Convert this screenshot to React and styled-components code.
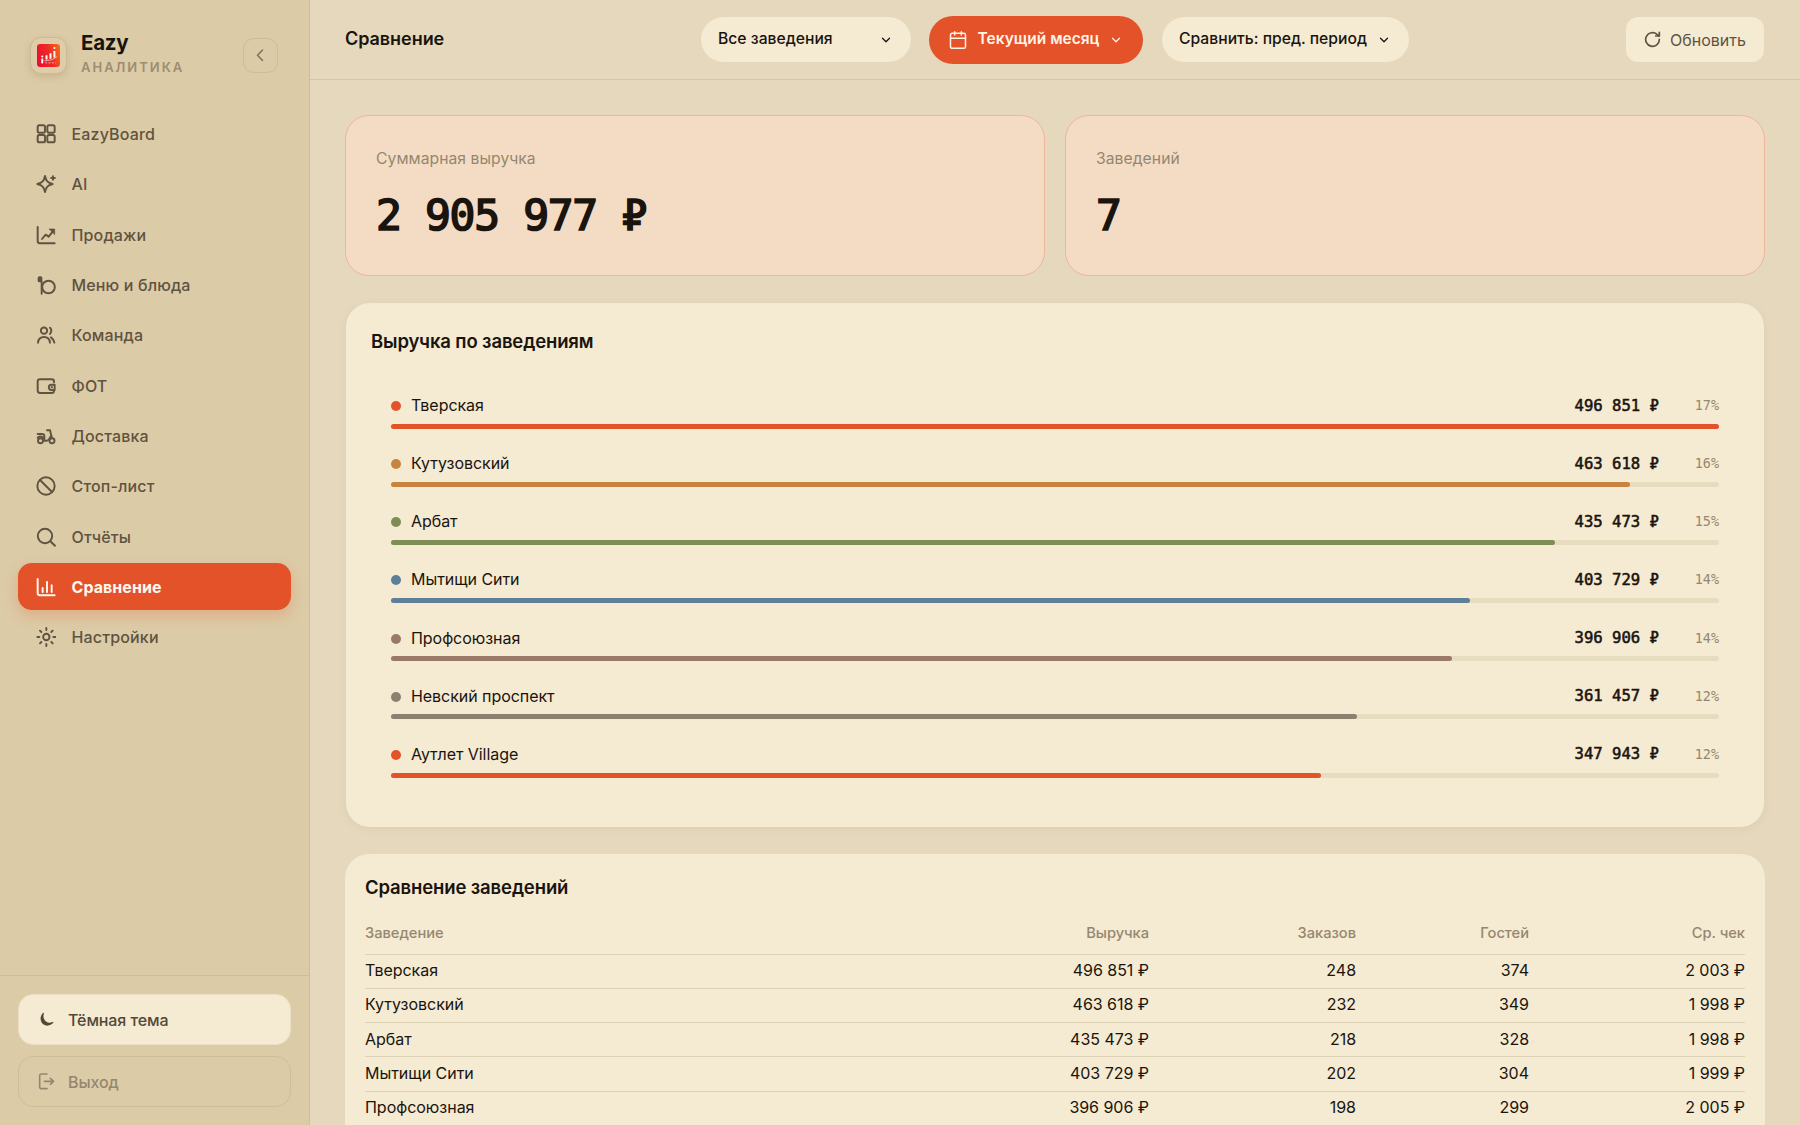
import React from 'react';
import styled, { createGlobalStyle, css } from 'styled-components';
import { Calendar, ChevronDown } from 'lucide-react';

const sans = "'Inter', 'Liberation Sans', sans-serif";
const mono = "'DejaVu Sans Mono', 'Liberation Mono', monospace";

const colors = {
  page: '#e5d8bc',
  sidebar: '#dccba7',
  panel: '#f5ead2',
  line: '#cebd9b',
  text: '#1a140e',
  soft: '#5f5341',
  muted: '#95876f',
  accent: '#e35229'
};

const venues = [
  { name: 'Тверская', revenue: 496851, share: 17, orders: 248, guests: 374, check: 2003, color: '#e35229' },
  { name: 'Кутузовский', revenue: 463618, share: 16, orders: 232, guests: 349, check: 1998, color: '#c8843e' },
  { name: 'Арбат', revenue: 435473, share: 15, orders: 218, guests: 328, check: 1998, color: '#7e8d54' },
  { name: 'Мытищи Сити', revenue: 403729, share: 14, orders: 202, guests: 304, check: 1999, color: '#5f7f99' },
  { name: 'Профсоюзная', revenue: 396906, share: 14, orders: 198, guests: 299, check: 2005, color: '#98796a' },
  { name: 'Невский проспект', revenue: 361457, share: 12, color: '#8d8070' },
  { name: 'Аутлет Village', revenue: 347943, share: 12, color: '#e35229' }
];

const maxRevenue = venues[0].revenue;

const money = (value) => `${String(value).replace(/\B(?=(\d{3})+$)/g, '\u00a0')}\u00a0₽`;

// nav glyphs, all drawn on a 60x60 grid
const icons = {
  board: (
    <>
      <rect x="5" y="4" width="22" height="22" rx="5" />
      <rect x="34" y="4" width="22" height="22" rx="5" />
      <rect x="5" y="33" width="22" height="22" rx="5" />
      <rect x="34" y="33" width="22" height="22" rx="5" />
    </>
  ),
  ai: (
    <>
      <path d="M27 6C30 21 35 26 50 30C35 34 30 39 27 54C24 39 19 34 4 30C19 26 24 21 27 6Z" />
      <path d="M51 6.5V17.5M45.5 12H56.5" />
    </>
  ),
  sales: (
    <>
      <path d="M5 6V48Q5 55 12 55H56" />
      <path d="M18 42L29 29L38 35L50 20" />
      <path d="M40 12H56V28Z" fill="currentColor" strokeWidth="2" />
    </>
  ),
  menu: (
    <>
      <circle cx="37.5" cy="36" r="19" />
      <path d="M17 20V56" />
      <rect x="7" y="6" width="10" height="14" rx="3" fill="currentColor" strokeWidth="4" />
    </>
  ),
  team: (
    <>
      <circle cx="24" cy="17" r="9.5" />
      <path d="M6 53C7 42 14 36 24 36C34 36 41 42 42 53" />
      <path d="M42 8Q50 17 42 27M45 37Q53 42 55 53" />
    </>
  ),
  payroll: (
    <>
      <path d="M54 19V17Q54 10 47 10H12Q5 10 5 17V43Q5 51 12 51H47Q54 51 54 45" />
      <path d="M56 26H46Q38.5 26 38.5 34T46 42H56Z" />
      <path d="M47 34H48" />
    </>
  ),
  delivery: (
    <>
      <circle cx="13.5" cy="44" r="7.5" />
      <circle cx="48" cy="44" r="7.5" />
      <path d="M33 13H42L47.5 35" />
      <path d="M5 24H18Q25 24 25 31V44H32Q38 44 44 31" />
      <path d="M5 35Q14 28 23 36" />
    </>
  ),
  stop: (
    <>
      <circle cx="30" cy="30" r="26" />
      <path d="M12 12L48 48" />
    </>
  ),
  search: (
    <>
      <circle cx="27" cy="27" r="21.5" />
      <path d="M43 43L57 56" />
    </>
  ),
  compare: (
    <>
      <path d="M5 6V48Q5 55 12 55H56" />
      <path d="M20 33V45M33 15V45M47 25V45" />
    </>
  ),
  settings: (
    <>
      <circle cx="31" cy="30" r="9.5" />
      <path d="M31 3V9M31 51V57M4 30H10M52 30H58M12 11L16 15M46 45L50 49M12 49L16 45M46 15L50 11" />
    </>
  )
};

const navItems = [
  { icon: 'board', label: 'EazyBoard' },
  { icon: 'ai', label: 'AI' },
  { icon: 'sales', label: 'Продажи' },
  { icon: 'menu', label: 'Меню и блюда' },
  { icon: 'team', label: 'Команда' },
  { icon: 'payroll', label: 'ФОТ' },
  { icon: 'delivery', label: 'Доставка' },
  { icon: 'stop', label: 'Стоп-лист' },
  { icon: 'search', label: 'Отчёты' },
  { icon: 'compare', label: 'Сравнение', active: true },
  { icon: 'settings', label: 'Настройки' }
];

function NavIcon({ name }) {
  return (
    <svg
      width="20"
      height="20"
      viewBox="0 0 60 60"
      fill="none"
      stroke="currentColor"
      strokeWidth="5.8"
      strokeLinecap="round"
      strokeLinejoin="round"
    >
      {icons[name]}
    </svg>
  );
}

function Logo() {
  return (
    <svg width="23" height="23" viewBox="0 0 70 70">
      <defs>
        <linearGradient id="logo" x1="0" y1="0.6" x2="1" y2="0.3">
          <stop offset="0" stopColor="#e8112f" />
          <stop offset="0.55" stopColor="#ee2a25" />
          <stop offset="1" stopColor="#f26a1b" />
        </linearGradient>
      </defs>
      <rect width="70" height="70" rx="10" fill="url(#logo)" />
      <g fill="#fff">
        <circle cx="16" cy="38" r="3.2" />
        <rect x="13" y="44" width="6" height="15" rx="2" />
        <rect x="26" y="34" width="6" height="13" rx="1" />
        <rect x="38" y="28" width="6" height="17" rx="1" />
        <rect x="50" y="21" width="6" height="20" rx="1" />
        <circle cx="53" cy="12" r="3.2" />
      </g>
      <path d="M23 51Q45 52 61 39" fill="none" stroke="#fff" strokeWidth="1.8" />
      <path d="M25 57H57" stroke="#fff" strokeWidth="5" strokeDasharray="6 4" opacity="0.4" />
    </svg>
  );
}

function Sidebar() {
  return (
    <Aside>
      <Brand>
        <LogoBox>
          <Logo />
        </LogoBox>
        <BrandText>
          <BrandName>Eazy</BrandName>
          <BrandSub>АНАЛИТИКА</BrandSub>
        </BrandText>
        <CollapseButton>
          <svg width="14" height="14" viewBox="0 0 14 14" fill="none" stroke="currentColor" strokeWidth="1.6" strokeLinecap="round" strokeLinejoin="round">
            <path d="M8.5 2L3.5 7.3L8.5 12.5" />
          </svg>
        </CollapseButton>
      </Brand>
      <Nav>
        {navItems.map((item) => (
          <NavItem key={item.label} $active={item.active}>
            <NavIcon name={item.icon} />
            <span>{item.label}</span>
          </NavItem>
        ))}
      </Nav>
      <SidebarFooter>
        <FooterButton $filled>
          <svg width="16" height="16" viewBox="0 0 48 48">
            <path d="M13 2C-1 13 3 40 24 41C33 41 41 36 44 30C41 29 38 32 31 32C17 31 10 17 15 3Z" fill="currentColor" />
          </svg>
          <span>Тёмная тема</span>
        </FooterButton>
        <FooterButton>
          <svg width="17" height="17" viewBox="0 0 51 51" fill="none" stroke="currentColor" strokeWidth="4.8" strokeLinecap="round" strokeLinejoin="round">
            <path d="M27 3H11Q5 3 5 9V41Q5 47 11 47H27" />
            <path d="M19 25H47M37 16L47 25L37 34" />
          </svg>
          <span>Выход</span>
        </FooterButton>
      </SidebarFooter>
    </Aside>
  );
}

function Header() {
  return (
    <Topbar>
      <PageTitle>Сравнение</PageTitle>
      <Filters>
        <Pill $width={210}>
          <span>Все заведения</span>
          <ChevronDown size={14} strokeWidth={2.2} />
        </Pill>
        <Pill $width={214} $accent>
          <Calendar size={20} strokeWidth={1.8} />
          <span>Текущий месяц</span>
          <ChevronDown size={14} strokeWidth={2.2} />
        </Pill>
        <Pill $width={247}>
          <span>Сравнить: пред. период</span>
          <ChevronDown size={14} strokeWidth={2.2} />
        </Pill>
      </Filters>
      <RefreshButton>
        <svg width="17" height="17" viewBox="0 0 51 51" fill="none" stroke="currentColor" strokeWidth="5" strokeLinecap="round" strokeLinejoin="round">
          <path d="M46 25A20.5 20.5 0 1 1 39 10L45 15" />
          <path d="M46 4V15H35" />
        </svg>
        <span>Обновить</span>
      </RefreshButton>
    </Topbar>
  );
}

function App() {
  return (
    <Layout>
      <GlobalStyle />
      <Sidebar />
      <Main>
        <Header />
        <Content>
          <Stats>
            <StatCard>
              <StatLabel>Суммарная выручка</StatLabel>
              <StatValue>{money(2905977)}</StatValue>
            </StatCard>
            <StatCard>
              <StatLabel>Заведений</StatLabel>
              <StatValue>7</StatValue>
            </StatCard>
          </Stats>
          <ChartPanel>
            <PanelTitle>Выручка по заведениям</PanelTitle>
            <Bars>
              {venues.map((venue) => (
                <BarRow key={venue.name}>
                  <BarInfo>
                    <Dot $color={venue.color} />
                    <VenueName>{venue.name}</VenueName>
                    <Revenue>{money(venue.revenue)}</Revenue>
                    <Share>{venue.share}%</Share>
                  </BarInfo>
                  <Track>
                    <Fill $color={venue.color} style={{ width: `${(venue.revenue / maxRevenue) * 100}%` }} />
                  </Track>
                </BarRow>
              ))}
            </Bars>
          </ChartPanel>
          <TablePanel>
            <PanelTitle>Сравнение заведений</PanelTitle>
            <TableHead>
              <span>Заведение</span>
              <span>Выручка</span>
              <span>Заказов</span>
              <span>Гостей</span>
              <span>Ср. чек</span>
            </TableHead>
            {venues.slice(0, 5).map((venue) => (
              <TableRow key={venue.name}>
                <span>{venue.name}</span>
                <span>{money(venue.revenue)}</span>
                <span>{venue.orders}</span>
                <span>{venue.guests}</span>
                <span>{money(venue.check)}</span>
              </TableRow>
            ))}
          </TablePanel>
        </Content>
      </Main>
    </Layout>
  );
}

export default App;

const GlobalStyle = createGlobalStyle`
  * {
    box-sizing: border-box;
  }

  body {
    margin: 0;
    overflow: hidden;
    background: ${colors.page};
    color: ${colors.text};
    font-family: ${sans};
    font-size: 16px;
  }

  button {
    font: inherit;
    padding: 0;
  }

  svg {
    flex: none;
  }
`;

const Layout = styled.div`
  display: flex;
  width: 1800px;
  height: 1125px;
  overflow: hidden;
`;

const Aside = styled.aside`
  display: flex;
  flex-direction: column;
  flex: none;
  width: 310px;
  background: ${colors.sidebar};
  border-right: 1px solid ${colors.line};
`;

const Brand = styled.div`
  display: flex;
  align-items: center;
  height: 110.5px;
  padding: 0 31px 0 30px;
`;

const LogoBox = styled.div`
  display: flex;
  align-items: center;
  justify-content: center;
  width: 37px;
  height: 37px;
  border: 1px solid #cdba96;
  border-radius: 11px;
  background: #dfcca8;
  box-shadow: 0 3px 7px rgba(120, 90, 40, 0.18);
`;

const BrandText = styled.div`
  margin: -2px 0 0 14px;
`;

const BrandName = styled.div`
  font-size: 20.5px;
  line-height: 26px;
  font-weight: 700;
  letter-spacing: -0.3px;
`;

const BrandSub = styled.div`
  font-size: 13px;
  line-height: 23px;
  font-weight: 600;
  letter-spacing: 2px;
  color: #9c8d73;
`;

const CollapseButton = styled.button`
  display: flex;
  align-items: center;
  justify-content: center;
  width: 35px;
  height: 35px;
  margin-left: auto;
  border: 1px solid ${colors.line};
  border-radius: 11px;
  background: none;
  color: #82745c;
`;

const Nav = styled.nav`
  display: flex;
  flex-direction: column;
  gap: 3px;
  padding: 0 18px 0 17.5px;
`;

const NavItem = styled.a`
  display: flex;
  align-items: center;
  gap: 16px;
  height: 47.3px;
  padding-left: 18px;
  border-radius: 14px;
  font-weight: 500;
  letter-spacing: 0.15px;
  color: ${colors.soft};

  ${({ $active }) =>
    $active &&
    css`
      background: ${colors.accent};
      color: #fff8ee;
      font-weight: 700;
      letter-spacing: 0.05px;
      box-shadow: 0 6px 14px rgba(227, 82, 41, 0.25);
    `}
`;

const SidebarFooter = styled.div`
  display: flex;
  flex-direction: column;
  gap: 11px;
  margin-top: auto;
  padding: 18px 18px 18px 18px;
  border-top: 1px solid ${colors.line};
`;

const FooterButton = styled.button`
  display: flex;
  align-items: center;
  gap: 13px;
  height: 51px;
  padding-left: 19px;
  border: 1px solid ${colors.line};
  border-radius: 15px;
  background: none;
  font-weight: 500;
  letter-spacing: -0.1px;
  color: ${colors.muted};

  ${({ $filled }) =>
    $filled &&
    css`
      padding-left: 20px;
      border-color: #eadfc4;
      background: ${colors.panel};
      color: #514838;
    `}
`;

const Main = styled.main`
  flex: 1;
  min-width: 0;
`;

const Topbar = styled.header`
  display: grid;
  grid-template-columns: 355.5px 1fr 138px;
  align-items: center;
  height: 80px;
  padding: 0 36px 0 35px;
  border-bottom: 1px solid #d5c5a5;
`;

const PageTitle = styled.h1`
  margin: -2px 0 0;
  font-size: 18px;
  font-weight: 600;
  letter-spacing: -0.05px;
`;

const Filters = styled.div`
  display: flex;
  align-items: center;
  gap: 18.5px;
`;

const Pill = styled.button`
  display: flex;
  align-items: center;
  justify-content: space-between;
  width: ${({ $width }) => $width}px;
  height: 45px;
  padding: 0 18px 0 17.5px;
  border: 0;
  border-radius: 23px;
  background: ${colors.panel};
  color: ${colors.text};
  font-size: 15.7px;
  font-weight: 500;
  white-space: nowrap;

  span {
    margin-top: -2px;
  }

  ${({ $accent }) =>
    $accent &&
    css`
      height: 48px;
      padding: 0 20px 0 19px;
      border-radius: 24px;
      background: ${colors.accent};
      color: #fff4e8;
      font-size: 15.5px;
      font-weight: 600;
    `}
`;

const RefreshButton = styled.button`
  display: flex;
  align-items: center;
  justify-content: center;
  gap: 9px;
  height: 45px;
  border: 0;
  border-radius: 12px;
  background: ${colors.panel};
  color: ${colors.soft};
`;

const Content = styled.div`
  display: flex;
  flex-direction: column;
  padding: 35px 35px 0;
`;

const Stats = styled.div`
  display: grid;
  grid-template-columns: 1fr 1fr;
  gap: 20px;
`;

const StatCard = styled.section`
  height: 161px;
  padding: 31px 30px;
  border: 1px solid #efb69c;
  border-radius: 24px;
  background: #f4dcc4;
`;

const StatLabel = styled.div`
  font-size: 15.7px;
  line-height: 24px;
  letter-spacing: 0.05px;
  color: ${colors.muted};
`;

/* outlined regular weight sits between the two weights the mono face has */
const StatValue = styled.div`
  margin-top: 15px;
  font-family: ${mono};
  font-size: 43px;
  line-height: 58px;
  letter-spacing: -1.35px;
  -webkit-text-stroke: 1.7px currentColor;
`;

const ChartPanel = styled.section`
  height: 524px;
  margin: 27px 1px 0;
  padding: 24px 25px;
  border-radius: 24px;
  background: ${colors.panel};
  box-shadow: 0 2px 8px rgba(150, 120, 60, 0.08);
`;

const PanelTitle = styled.h2`
  margin: 0;
  font-size: 18.5px;
  line-height: 28px;
  font-weight: 600;
  letter-spacing: -0.13px;
`;

const Bars = styled.div`
  padding: 38px 20px 0;
`;

const BarRow = styled.div`
  height: 58.17px;
`;

const BarInfo = styled.div`
  display: flex;
  align-items: center;
  height: 24px;
  line-height: 24px;
`;

const Dot = styled.span`
  width: 10px;
  height: 10px;
  margin: 2px 10px 0 0;
  border-radius: 50%;
  background: ${({ $color }) => $color};
`;

const VenueName = styled.span`
  flex: 1;
  letter-spacing: -0.05px;
`;

const Revenue = styled.span`
  margin-top: 1px;
  font-family: ${mono};
  font-size: 15.6px;
  -webkit-text-stroke: 0.55px currentColor;
`;

const Share = styled.span`
  width: 60px;
  margin-top: 2px;
  font-family: ${mono};
  font-size: 13.4px;
  text-align: right;
  color: ${colors.muted};
`;

const Track = styled.div`
  height: 5px;
  margin-top: 6.7px;
  border-radius: 3px;
  background: #e7dcc0;
`;

const Fill = styled.div`
  height: 100%;
  border-radius: 3px;
  background: ${({ $color }) => $color};
`;

const TablePanel = styled.section`
  height: 300px;
  margin-top: 26.5px;
  padding: 19.5px 20px 0;
  border-radius: 24px;
  background: ${colors.panel};
`;

const TableRow = styled.div`
  display: grid;
  grid-template-columns: 1fr 184px 207px 173px 216px;
  align-items: center;
  height: 34.25px;
  padding-bottom: 2px;
  border-bottom: 1px solid #ddd1b6;
  letter-spacing: -0.03px;

  span + span {
    text-align: right;
  }
`;

const TableHead = styled(TableRow)`
  height: 40px;
  margin-top: 13.5px;
  font-size: 14.7px;
  font-weight: 500;
  color: ${colors.muted};
`;
